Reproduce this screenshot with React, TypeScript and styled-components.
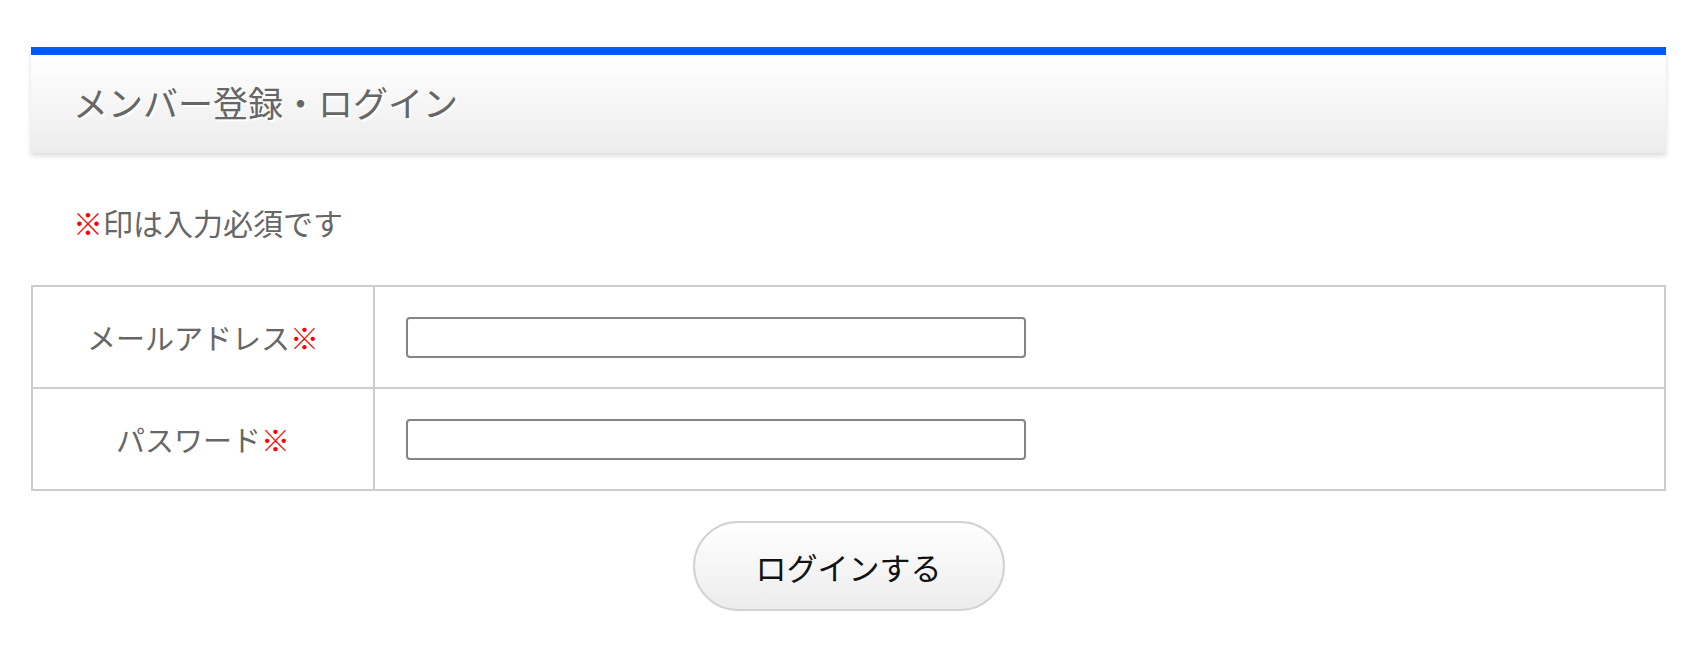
import React from "react";
import styled, { createGlobalStyle } from "styled-components";

const GlobalStyle = createGlobalStyle`
  html, body {
    margin: 0;
    padding: 0;
    background: #ffffff;
  }
  body {
    font-family: "Noto Sans CJK JP", "Noto Sans", sans-serif;
    color: #666666;
  }
  * { box-sizing: border-box; }
`;

const Page = styled.div`
  padding: 47px 38px 0 31px;
`;

const Header = styled.div`
  height: 106px;
  border-top: 8px solid #0059ff;
  background: linear-gradient(to bottom, #ffffff 0%, #ececec 100%);
  box-shadow: 0 3px 5px rgba(0, 0, 0, 0.14);
  display: flex;
  align-items: center;
  padding: 0 0 6px 42px;
`;

const Title = styled.h1`
  margin: 0;
  font-size: 35px;
  font-weight: 400;
  line-height: 1;
  color: #666666;
  letter-spacing: 0;
  text-shadow: 2px 2px 1px #ffffff;
`;

const Note = styled.p`
  margin: 47px 0 41px 42px;
  height: 44px;
  display: flex;
  align-items: center;
  font-size: 30px;
  line-height: 1;
  color: #666666;
`;

const Mark = styled.span`
  color: #ff0000;
`;

const FormGrid = styled.div`
  display: grid;
  grid-template-columns: 342px 1fr;
  grid-auto-rows: 102px;
  border-top: 2px solid #cccccc;
  border-left: 2px solid #cccccc;
`;

const Cell = styled.div<{ $label?: boolean }>`
  border-right: 2px solid #cccccc;
  border-bottom: 2px solid #cccccc;
  display: flex;
  align-items: center;
  justify-content: ${(p) => (p.$label ? "center" : "flex-start")};
  padding-left: ${(p) => (p.$label ? "0" : "31px")};
  font-size: 29px;
  line-height: 1;
  color: #666666;
`;

const TextInput = styled.input`
  width: 620px;
  height: 41px;
  border: 2px solid #858585;
  border-radius: 4px;
  background: #ffffff;
  padding: 0 8px;
  font-size: 20px;
  outline: none;
`;

const ButtonRow = styled.div`
  display: flex;
  justify-content: center;
  margin-top: 30px;
`;

const LoginButton = styled.button`
  width: 312px;
  height: 90px;
  border: 2px solid #d2d2d2;
  border-radius: 45px;
  background: linear-gradient(to bottom, #ffffff 0%, #ececec 100%);
  font-family: "Noto Sans CJK JP", "Noto Sans", sans-serif;
  font-size: 31px;
  line-height: 1;
  color: #111111;
  cursor: pointer;
  padding: 0;
`;

export default function App() {
  return (
    <>
      <GlobalStyle />
      <Page>
        <Header>
          <Title>メンバー登録・ログイン</Title>
        </Header>
        <Note>
          <Mark>※</Mark>印は入力必須です
        </Note>
        <FormGrid>
          <Cell $label>
            メールアドレス<Mark>※</Mark>
          </Cell>
          <Cell>
            <TextInput type="email" />
          </Cell>
          <Cell $label>
            パスワード<Mark>※</Mark>
          </Cell>
          <Cell>
            <TextInput type="password" />
          </Cell>
        </FormGrid>
        <ButtonRow>
          <LoginButton type="button">ログインする</LoginButton>
        </ButtonRow>
      </Page>
    </>
  );
}
